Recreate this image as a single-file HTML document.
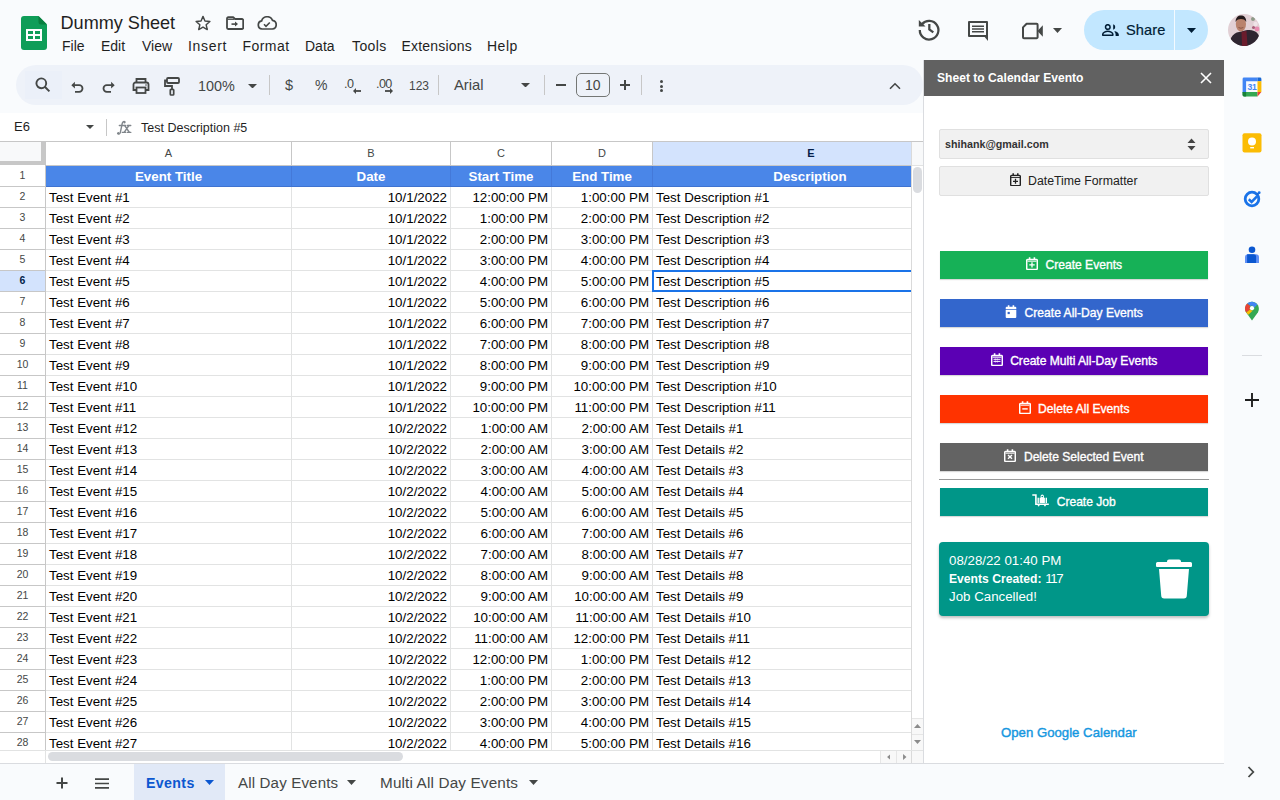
<!DOCTYPE html>
<html><head><meta charset="utf-8">
<style>
*{margin:0;padding:0;box-sizing:border-box}
html,body{width:1280px;height:800px;overflow:hidden;background:#f9fbfd;font-family:"Liberation Sans",sans-serif;position:relative}
.a{position:absolute}
svg{position:absolute;display:block}
/* header */
#title{left:60.5px;top:11.5px;font-size:18.1px;color:#1f1f1f;white-space:nowrap;line-height:22px}
.menu{top:38px;font-size:14px;color:#1f1f1f;line-height:17px;white-space:nowrap}
#pill{left:16px;top:65px;width:907px;height:40px;border-radius:20px;background:#eef2f9}
.tb{color:#444746;font-size:14px;line-height:16px;white-space:nowrap}
.sep{width:1px;height:20px;background:#c7c7c7;top:75px}
/* formula bar */
#fbar{left:0;top:113px;width:923px;height:29px;background:#fff}
/* grid */
#gridbg{left:0;top:141px;width:923px;height:622px;background:#fff}
.rh{position:absolute;left:0;width:45px;height:20px;text-align:center;font-size:10.5px;line-height:19px;color:#444746}
.rh.sel{background:#d3e3fd;color:#0b57d0;font-weight:bold;color:#041e49}
.ch{position:absolute;top:142px;height:23px;text-align:center;font-size:11px;line-height:22px;color:#444746}
.ch.sel{background:#d3e3fd;color:#041e49;font-weight:bold}
.c{position:absolute;height:20px;font-size:13.33px;line-height:21px;color:#000;white-space:nowrap;overflow:hidden;padding:0 3px}
.c.r{text-align:right}
.c.hd{background:#4a86e8;color:#fff;font-weight:bold;text-align:center}
.hl{position:absolute;left:0;width:911px;height:1px;background:#e2e3e3}
.vl{position:absolute;top:142px;width:1px;height:608px;background:#e2e3e3}
.vl.h{background:#c7c7c7;height:23px}
/* panel */
#panel{left:923px;top:60px;width:301px;height:703px;background:#fff;border-left:1px solid #dadce0}
#phead{left:924px;top:60px;width:300px;height:36px;background:#616161}
.btn{position:absolute;left:940px;width:268px;height:28px;color:#fff;font-size:12.1px;display:flex;align-items:center;justify-content:center;gap:7.5px;box-shadow:0 1px 1px rgba(0,0,0,.15)}
.btn svg{transform:translateY(-2px)}
.btn span{-webkit-text-stroke:0.35px #fff;line-height:15px;margin-top:0}
/* sidebar */
#side{left:1224px;top:60px;width:56px;height:740px;background:#f9fbfd}
/* bottom */
#bottom{left:0;top:763px;width:1224px;height:37px;background:#f9fbfd;border-top:1px solid #dadce0}
.tab{top:775px;font-size:14px;line-height:17px;color:#444746;white-space:nowrap}
</style></head><body>
<!-- logo -->
<svg style="left:21px;top:16px" width="26" height="34" viewBox="0 0 26 34">
<path d="M3 0h14.5L26 8.5V31a3 3 0 0 1-3 3H3a3 3 0 0 1-3-3V3a3 3 0 0 1 3-3z" fill="#0f9d58"/>
<path d="M17.5 0L26 8.5h-6a2.5 2.5 0 0 1-2.5-2.5z" fill="#087f3f"/>
<rect x="5" y="13" width="16" height="12" fill="#fff"/>
<rect x="7" y="15" width="5" height="3" fill="#0f9d58"/><rect x="14" y="15" width="5" height="3" fill="#0f9d58"/>
<rect x="7" y="20" width="5" height="3" fill="#0f9d58"/><rect x="14" y="20" width="5" height="3" fill="#0f9d58"/>
</svg>
<div class="a" id="title">Dummy Sheet</div>
<div class="a menu" style="left:62px">File</div>
<div class="a menu" style="left:101px">Edit</div>
<div class="a menu" style="left:142px">View</div>
<div class="a menu" style="left:188px;letter-spacing:0.7px">Insert</div>
<div class="a menu" style="left:242.5px;letter-spacing:0.45px">Format</div>
<div class="a menu" style="left:305px">Data</div>
<div class="a menu" style="left:352px;letter-spacing:0.4px">Tools</div>
<div class="a menu" style="left:401.5px;letter-spacing:0.2px">Extensions</div>
<div class="a menu" style="left:487px;letter-spacing:0.5px">Help</div>


<!-- star -->
<svg style="left:194px;top:14px" width="18" height="18" viewBox="0 0 24 24"><path d="M12 3.2l2.6 6.1 6.6.6-5 4.4 1.5 6.5L12 17.4l-5.7 3.4 1.5-6.5-5-4.4 6.6-.6z" fill="none" stroke="#444746" stroke-width="1.9" stroke-linejoin="round"/></svg>
<!-- folder move -->
<svg style="left:226px;top:16px" width="18" height="14" viewBox="0 0 18 14"><path d="M2.2 1.2h5l1.8 1.8h7a1.2 1.2 0 0 1 1.2 1.2v7.6a1.2 1.2 0 0 1-1.2 1.2H2.2A1.2 1.2 0 0 1 1 11.8V2.4a1.2 1.2 0 0 1 1.2-1.2z" fill="none" stroke="#444746" stroke-width="1.8" stroke-linejoin="round"/><path d="M1.5 2.5h6.5v1.4H1.5z" fill="#444746"/><path d="M5.5 8.1h4" stroke="#444746" stroke-width="1.6"/><path d="M9 5.6l3 2.5-3 2.5z" fill="#444746"/></svg>
<!-- cloud done -->
<svg style="left:257px;top:16px" width="20" height="14" viewBox="0 0 20 14"><path d="M5 13A4.1 4.1 0 0 1 4.6 4.9 5.8 5.8 0 0 1 15.5 4.3 4.4 4.4 0 0 1 15.4 13z" fill="none" stroke="#444746" stroke-width="1.7"/><path d="M7 8.3l2 2 3.8-3.8" fill="none" stroke="#444746" stroke-width="1.6"/></svg>
<!-- history -->
<svg style="left:915.5px;top:15.5px" width="26" height="26" viewBox="0 0 24 24"><path d="M5.5 7.6A8.6 8.6 0 1 1 3.5 13" fill="none" stroke="#444746" stroke-width="2.1"/><path d="M2.6 3.6v6.2h6.2z" fill="#444746"/><path d="M12.3 7.4v5l3.7 2.7" fill="none" stroke="#444746" stroke-width="2.1"/></svg>
<!-- comment -->
<svg style="left:967px;top:20px" width="22" height="22" viewBox="0 0 22 22"><path d="M2 2h18v14H2z" fill="none" stroke="#444746" stroke-width="2" stroke-linejoin="round"/><path d="M16 15h5v6z" fill="#444746"/><path d="M5 6.2h12M5 9h12M5 11.8h12" stroke="#444746" stroke-width="1.5"/></svg>
<!-- meet -->
<svg style="left:1022px;top:22px" width="22" height="18" viewBox="0 0 22 18"><path d="M4.6 1.8h10a1 1 0 0 1 1 1v12.4a1 1 0 0 1-1 1H2a1 1 0 0 1-1-1V5.4z" fill="none" stroke="#444746" stroke-width="2" stroke-linejoin="round"/><path d="M15.5 8.9l5.3-5.6v11.4l-5.3-5.6z" fill="#444746"/></svg>
<svg style="left:1053px;top:28px" width="9" height="5" viewBox="0 0 9 5"><path d="M0 0h9L4.5 5z" fill="#444746"/></svg>
<!-- share -->
<div class="a" style="left:1084px;top:10px;width:124px;height:40px;border-radius:20px;background:#c2e7ff"></div>
<div class="a" style="left:1174px;top:10px;width:1px;height:40px;background:#f4faff"></div>
<svg style="left:1102px;top:24px" width="17" height="12" viewBox="0 0 17 12"><circle cx="5.8" cy="3" r="2.3" fill="none" stroke="#001d35" stroke-width="1.5"/><path d="M.75 11.25V10.3c0-1.8 3-3 5.05-3s5.05 1.2 5.05 3v.95z" fill="none" stroke="#001d35" stroke-width="1.5" stroke-linejoin="round"/><path d="M11.2.3a2.8 2.8 0 0 1 0 5.4z" fill="#001d35"/><path d="M13.2 7.3c1.8.6 3.6 1.6 3.6 3.3V12h-3.2v-1.4c0-1.3-.5-2.3-1.4-3.1z" fill="#001d35"/></svg>
<div class="a" style="left:1126px;top:22px;font-size:14.6px;line-height:17px;color:#001d35;letter-spacing:0.1px;-webkit-text-stroke:0.2px #001d35">Share</div>
<svg style="left:1187px;top:28px" width="9" height="5" viewBox="0 0 9 5"><path d="M0 0h9L4.5 5z" fill="#001d35"/></svg>
<!-- avatar -->
<svg style="left:1228px;top:14px" width="32" height="32" viewBox="0 0 32 32"><defs><clipPath id="av"><circle cx="16" cy="16" r="16"/></clipPath></defs><g clip-path="url(#av)">
<rect width="32" height="32" fill="#e2d0d5"/>
<circle cx="25" cy="5" r="2" fill="#8c9a88"/><circle cx="27.5" cy="10" r="2.2" fill="#efe4e8"/><circle cx="29" cy="15" r="2.4" fill="#e88cb0"/><circle cx="25.5" cy="13.5" r="1.5" fill="#a8607a"/>
<path d="M1 32L3 24C5 20 8 18.5 11 18L17 16.5C22 15.5 27 16 30 20L32 24V32z" fill="#2e2530"/>
<path d="M13.5 18L18.5 16.8L19.5 32H14z" fill="#6a1c2c"/>
<ellipse cx="12.9" cy="10" rx="5.1" ry="7.6" fill="#b9826c"/>
<path d="M7.6 8C7.6 3.5 10.2 1.6 13 1.6S18.4 3.5 18.2 8C17 5.6 15.2 5 13 5S8.8 5.6 7.6 8z" fill="#241a1c"/>
<path d="M10.5 13.5q2.4 1.5 4.8 0" fill="none" stroke="#7d4a3c" stroke-width="0.8"/>
</g></svg>
<div class="a" id="pill"></div>
<div class="a" id="fbar"></div>
<div class="a" id="gridbg"></div>
<div class="a" style="left:14px;top:119px;font-size:13px;line-height:16px;color:#1f1f1f">E6</div>
<svg style="left:86px;top:125px" width="8" height="4" viewBox="0 0 8 4"><path d="M0 0h8L4 4z" fill="#444746"/></svg>
<div class="a" style="left:106px;top:119px;width:1px;height:17px;background:#c7c7c7"></div>
<svg style="left:110px;top:115px" width="30" height="25" viewBox="0 0 30 25"><g fill="none" stroke="#80868b" stroke-linecap="round"><path d="M7.6 18.4c.6 1.2 2.2 1 2.7-.8L12.3 8.2c.4-1.6 1.9-2.2 2.7-1.2" stroke-width="1.4"/><path d="M9.3 10.5h6.2M17.2 10.5h3.6M12.2 17.3h3.5M17.3 17.3h3.6" stroke-width="1.3"/><path d="M14.8 10.6l4.4 6.6M18.8 10.6l-4.4 6.6" stroke-width="1.5"/></g><circle cx="8.4" cy="18.2" r="1.1" fill="#80868b"/><circle cx="14.4" cy="7.6" r="1" fill="#80868b"/></svg>
<div class="a" style="left:141px;top:119.5px;font-size:12.5px;line-height:16px;color:#1f1f1f">Test Description #5</div>

<div class="a" style="left:0;top:0;width:911px;height:750px;overflow:hidden"><div class="ch" style="left:46px;width:245px">A</div>
<div class="ch" style="left:292px;width:158px">B</div>
<div class="ch" style="left:451px;width:100px">C</div>
<div class="ch" style="left:552px;width:100px">D</div>
<div class="ch sel" style="left:653px;width:314px;padding-left:2px">E</div></div>
<div class="a" style="left:0;top:0;width:911px;height:750px;overflow:hidden"><div class="rh" style="top:166px">1</div>
<div class="c hd" style="left:46px;top:166px;width:245px">Event Title</div>
<div class="c hd" style="left:292px;top:166px;width:158px">Date</div>
<div class="c hd" style="left:451px;top:166px;width:100px">Start Time</div>
<div class="c hd" style="left:552px;top:166px;width:100px">End Time</div>
<div class="c hd" style="left:653px;top:166px;width:314px">Description</div>
<div class="hl" style="top:186px"></div>
<div class="hl" style="top:186px;width:45px;background:#c7c7c7"></div>
<div class="rh" style="top:187px">2</div>
<div class="c l" style="left:46px;top:187px;width:245px">Test Event #1</div>
<div class="c r" style="left:292px;top:187px;width:158px">10/1/2022</div>
<div class="c r" style="left:451px;top:187px;width:100px">12:00:00 PM</div>
<div class="c r" style="left:552px;top:187px;width:100px">1:00:00 PM</div>
<div class="c l" style="left:653px;top:187px;width:314px">Test Description #1</div>
<div class="hl" style="top:207px"></div>
<div class="hl" style="top:207px;width:45px;background:#c7c7c7"></div>
<div class="rh" style="top:208px">3</div>
<div class="c l" style="left:46px;top:208px;width:245px">Test Event #2</div>
<div class="c r" style="left:292px;top:208px;width:158px">10/1/2022</div>
<div class="c r" style="left:451px;top:208px;width:100px">1:00:00 PM</div>
<div class="c r" style="left:552px;top:208px;width:100px">2:00:00 PM</div>
<div class="c l" style="left:653px;top:208px;width:314px">Test Description #2</div>
<div class="hl" style="top:228px"></div>
<div class="hl" style="top:228px;width:45px;background:#c7c7c7"></div>
<div class="rh" style="top:229px">4</div>
<div class="c l" style="left:46px;top:229px;width:245px">Test Event #3</div>
<div class="c r" style="left:292px;top:229px;width:158px">10/1/2022</div>
<div class="c r" style="left:451px;top:229px;width:100px">2:00:00 PM</div>
<div class="c r" style="left:552px;top:229px;width:100px">3:00:00 PM</div>
<div class="c l" style="left:653px;top:229px;width:314px">Test Description #3</div>
<div class="hl" style="top:249px"></div>
<div class="hl" style="top:249px;width:45px;background:#c7c7c7"></div>
<div class="rh" style="top:250px">5</div>
<div class="c l" style="left:46px;top:250px;width:245px">Test Event #4</div>
<div class="c r" style="left:292px;top:250px;width:158px">10/1/2022</div>
<div class="c r" style="left:451px;top:250px;width:100px">3:00:00 PM</div>
<div class="c r" style="left:552px;top:250px;width:100px">4:00:00 PM</div>
<div class="c l" style="left:653px;top:250px;width:314px">Test Description #4</div>
<div class="hl" style="top:270px"></div>
<div class="hl" style="top:270px;width:45px;background:#c7c7c7"></div>
<div class="rh sel" style="top:271px">6</div>
<div class="c l" style="left:46px;top:271px;width:245px">Test Event #5</div>
<div class="c r" style="left:292px;top:271px;width:158px">10/1/2022</div>
<div class="c r" style="left:451px;top:271px;width:100px">4:00:00 PM</div>
<div class="c r" style="left:552px;top:271px;width:100px">5:00:00 PM</div>
<div class="c l" style="left:653px;top:271px;width:314px">Test Description #5</div>
<div class="hl" style="top:291px"></div>
<div class="hl" style="top:291px;width:45px;background:#c7c7c7"></div>
<div class="rh" style="top:292px">7</div>
<div class="c l" style="left:46px;top:292px;width:245px">Test Event #6</div>
<div class="c r" style="left:292px;top:292px;width:158px">10/1/2022</div>
<div class="c r" style="left:451px;top:292px;width:100px">5:00:00 PM</div>
<div class="c r" style="left:552px;top:292px;width:100px">6:00:00 PM</div>
<div class="c l" style="left:653px;top:292px;width:314px">Test Description #6</div>
<div class="hl" style="top:312px"></div>
<div class="hl" style="top:312px;width:45px;background:#c7c7c7"></div>
<div class="rh" style="top:313px">8</div>
<div class="c l" style="left:46px;top:313px;width:245px">Test Event #7</div>
<div class="c r" style="left:292px;top:313px;width:158px">10/1/2022</div>
<div class="c r" style="left:451px;top:313px;width:100px">6:00:00 PM</div>
<div class="c r" style="left:552px;top:313px;width:100px">7:00:00 PM</div>
<div class="c l" style="left:653px;top:313px;width:314px">Test Description #7</div>
<div class="hl" style="top:333px"></div>
<div class="hl" style="top:333px;width:45px;background:#c7c7c7"></div>
<div class="rh" style="top:334px">9</div>
<div class="c l" style="left:46px;top:334px;width:245px">Test Event #8</div>
<div class="c r" style="left:292px;top:334px;width:158px">10/1/2022</div>
<div class="c r" style="left:451px;top:334px;width:100px">7:00:00 PM</div>
<div class="c r" style="left:552px;top:334px;width:100px">8:00:00 PM</div>
<div class="c l" style="left:653px;top:334px;width:314px">Test Description #8</div>
<div class="hl" style="top:354px"></div>
<div class="hl" style="top:354px;width:45px;background:#c7c7c7"></div>
<div class="rh" style="top:355px">10</div>
<div class="c l" style="left:46px;top:355px;width:245px">Test Event #9</div>
<div class="c r" style="left:292px;top:355px;width:158px">10/1/2022</div>
<div class="c r" style="left:451px;top:355px;width:100px">8:00:00 PM</div>
<div class="c r" style="left:552px;top:355px;width:100px">9:00:00 PM</div>
<div class="c l" style="left:653px;top:355px;width:314px">Test Description #9</div>
<div class="hl" style="top:375px"></div>
<div class="hl" style="top:375px;width:45px;background:#c7c7c7"></div>
<div class="rh" style="top:376px">11</div>
<div class="c l" style="left:46px;top:376px;width:245px">Test Event #10</div>
<div class="c r" style="left:292px;top:376px;width:158px">10/1/2022</div>
<div class="c r" style="left:451px;top:376px;width:100px">9:00:00 PM</div>
<div class="c r" style="left:552px;top:376px;width:100px">10:00:00 PM</div>
<div class="c l" style="left:653px;top:376px;width:314px">Test Description #10</div>
<div class="hl" style="top:396px"></div>
<div class="hl" style="top:396px;width:45px;background:#c7c7c7"></div>
<div class="rh" style="top:397px">12</div>
<div class="c l" style="left:46px;top:397px;width:245px">Test Event #11</div>
<div class="c r" style="left:292px;top:397px;width:158px">10/1/2022</div>
<div class="c r" style="left:451px;top:397px;width:100px">10:00:00 PM</div>
<div class="c r" style="left:552px;top:397px;width:100px">11:00:00 PM</div>
<div class="c l" style="left:653px;top:397px;width:314px">Test Description #11</div>
<div class="hl" style="top:417px"></div>
<div class="hl" style="top:417px;width:45px;background:#c7c7c7"></div>
<div class="rh" style="top:418px">13</div>
<div class="c l" style="left:46px;top:418px;width:245px">Test Event #12</div>
<div class="c r" style="left:292px;top:418px;width:158px">10/2/2022</div>
<div class="c r" style="left:451px;top:418px;width:100px">1:00:00 AM</div>
<div class="c r" style="left:552px;top:418px;width:100px">2:00:00 AM</div>
<div class="c l" style="left:653px;top:418px;width:314px">Test Details #1</div>
<div class="hl" style="top:438px"></div>
<div class="hl" style="top:438px;width:45px;background:#c7c7c7"></div>
<div class="rh" style="top:439px">14</div>
<div class="c l" style="left:46px;top:439px;width:245px">Test Event #13</div>
<div class="c r" style="left:292px;top:439px;width:158px">10/2/2022</div>
<div class="c r" style="left:451px;top:439px;width:100px">2:00:00 AM</div>
<div class="c r" style="left:552px;top:439px;width:100px">3:00:00 AM</div>
<div class="c l" style="left:653px;top:439px;width:314px">Test Details #2</div>
<div class="hl" style="top:459px"></div>
<div class="hl" style="top:459px;width:45px;background:#c7c7c7"></div>
<div class="rh" style="top:460px">15</div>
<div class="c l" style="left:46px;top:460px;width:245px">Test Event #14</div>
<div class="c r" style="left:292px;top:460px;width:158px">10/2/2022</div>
<div class="c r" style="left:451px;top:460px;width:100px">3:00:00 AM</div>
<div class="c r" style="left:552px;top:460px;width:100px">4:00:00 AM</div>
<div class="c l" style="left:653px;top:460px;width:314px">Test Details #3</div>
<div class="hl" style="top:480px"></div>
<div class="hl" style="top:480px;width:45px;background:#c7c7c7"></div>
<div class="rh" style="top:481px">16</div>
<div class="c l" style="left:46px;top:481px;width:245px">Test Event #15</div>
<div class="c r" style="left:292px;top:481px;width:158px">10/2/2022</div>
<div class="c r" style="left:451px;top:481px;width:100px">4:00:00 AM</div>
<div class="c r" style="left:552px;top:481px;width:100px">5:00:00 AM</div>
<div class="c l" style="left:653px;top:481px;width:314px">Test Details #4</div>
<div class="hl" style="top:501px"></div>
<div class="hl" style="top:501px;width:45px;background:#c7c7c7"></div>
<div class="rh" style="top:502px">17</div>
<div class="c l" style="left:46px;top:502px;width:245px">Test Event #16</div>
<div class="c r" style="left:292px;top:502px;width:158px">10/2/2022</div>
<div class="c r" style="left:451px;top:502px;width:100px">5:00:00 AM</div>
<div class="c r" style="left:552px;top:502px;width:100px">6:00:00 AM</div>
<div class="c l" style="left:653px;top:502px;width:314px">Test Details #5</div>
<div class="hl" style="top:522px"></div>
<div class="hl" style="top:522px;width:45px;background:#c7c7c7"></div>
<div class="rh" style="top:523px">18</div>
<div class="c l" style="left:46px;top:523px;width:245px">Test Event #17</div>
<div class="c r" style="left:292px;top:523px;width:158px">10/2/2022</div>
<div class="c r" style="left:451px;top:523px;width:100px">6:00:00 AM</div>
<div class="c r" style="left:552px;top:523px;width:100px">7:00:00 AM</div>
<div class="c l" style="left:653px;top:523px;width:314px">Test Details #6</div>
<div class="hl" style="top:543px"></div>
<div class="hl" style="top:543px;width:45px;background:#c7c7c7"></div>
<div class="rh" style="top:544px">19</div>
<div class="c l" style="left:46px;top:544px;width:245px">Test Event #18</div>
<div class="c r" style="left:292px;top:544px;width:158px">10/2/2022</div>
<div class="c r" style="left:451px;top:544px;width:100px">7:00:00 AM</div>
<div class="c r" style="left:552px;top:544px;width:100px">8:00:00 AM</div>
<div class="c l" style="left:653px;top:544px;width:314px">Test Details #7</div>
<div class="hl" style="top:564px"></div>
<div class="hl" style="top:564px;width:45px;background:#c7c7c7"></div>
<div class="rh" style="top:565px">20</div>
<div class="c l" style="left:46px;top:565px;width:245px">Test Event #19</div>
<div class="c r" style="left:292px;top:565px;width:158px">10/2/2022</div>
<div class="c r" style="left:451px;top:565px;width:100px">8:00:00 AM</div>
<div class="c r" style="left:552px;top:565px;width:100px">9:00:00 AM</div>
<div class="c l" style="left:653px;top:565px;width:314px">Test Details #8</div>
<div class="hl" style="top:585px"></div>
<div class="hl" style="top:585px;width:45px;background:#c7c7c7"></div>
<div class="rh" style="top:586px">21</div>
<div class="c l" style="left:46px;top:586px;width:245px">Test Event #20</div>
<div class="c r" style="left:292px;top:586px;width:158px">10/2/2022</div>
<div class="c r" style="left:451px;top:586px;width:100px">9:00:00 AM</div>
<div class="c r" style="left:552px;top:586px;width:100px">10:00:00 AM</div>
<div class="c l" style="left:653px;top:586px;width:314px">Test Details #9</div>
<div class="hl" style="top:606px"></div>
<div class="hl" style="top:606px;width:45px;background:#c7c7c7"></div>
<div class="rh" style="top:607px">22</div>
<div class="c l" style="left:46px;top:607px;width:245px">Test Event #21</div>
<div class="c r" style="left:292px;top:607px;width:158px">10/2/2022</div>
<div class="c r" style="left:451px;top:607px;width:100px">10:00:00 AM</div>
<div class="c r" style="left:552px;top:607px;width:100px">11:00:00 AM</div>
<div class="c l" style="left:653px;top:607px;width:314px">Test Details #10</div>
<div class="hl" style="top:627px"></div>
<div class="hl" style="top:627px;width:45px;background:#c7c7c7"></div>
<div class="rh" style="top:628px">23</div>
<div class="c l" style="left:46px;top:628px;width:245px">Test Event #22</div>
<div class="c r" style="left:292px;top:628px;width:158px">10/2/2022</div>
<div class="c r" style="left:451px;top:628px;width:100px">11:00:00 AM</div>
<div class="c r" style="left:552px;top:628px;width:100px">12:00:00 PM</div>
<div class="c l" style="left:653px;top:628px;width:314px">Test Details #11</div>
<div class="hl" style="top:648px"></div>
<div class="hl" style="top:648px;width:45px;background:#c7c7c7"></div>
<div class="rh" style="top:649px">24</div>
<div class="c l" style="left:46px;top:649px;width:245px">Test Event #23</div>
<div class="c r" style="left:292px;top:649px;width:158px">10/2/2022</div>
<div class="c r" style="left:451px;top:649px;width:100px">12:00:00 PM</div>
<div class="c r" style="left:552px;top:649px;width:100px">1:00:00 PM</div>
<div class="c l" style="left:653px;top:649px;width:314px">Test Details #12</div>
<div class="hl" style="top:669px"></div>
<div class="hl" style="top:669px;width:45px;background:#c7c7c7"></div>
<div class="rh" style="top:670px">25</div>
<div class="c l" style="left:46px;top:670px;width:245px">Test Event #24</div>
<div class="c r" style="left:292px;top:670px;width:158px">10/2/2022</div>
<div class="c r" style="left:451px;top:670px;width:100px">1:00:00 PM</div>
<div class="c r" style="left:552px;top:670px;width:100px">2:00:00 PM</div>
<div class="c l" style="left:653px;top:670px;width:314px">Test Details #13</div>
<div class="hl" style="top:690px"></div>
<div class="hl" style="top:690px;width:45px;background:#c7c7c7"></div>
<div class="rh" style="top:691px">26</div>
<div class="c l" style="left:46px;top:691px;width:245px">Test Event #25</div>
<div class="c r" style="left:292px;top:691px;width:158px">10/2/2022</div>
<div class="c r" style="left:451px;top:691px;width:100px">2:00:00 PM</div>
<div class="c r" style="left:552px;top:691px;width:100px">3:00:00 PM</div>
<div class="c l" style="left:653px;top:691px;width:314px">Test Details #14</div>
<div class="hl" style="top:711px"></div>
<div class="hl" style="top:711px;width:45px;background:#c7c7c7"></div>
<div class="rh" style="top:712px">27</div>
<div class="c l" style="left:46px;top:712px;width:245px">Test Event #26</div>
<div class="c r" style="left:292px;top:712px;width:158px">10/2/2022</div>
<div class="c r" style="left:451px;top:712px;width:100px">3:00:00 PM</div>
<div class="c r" style="left:552px;top:712px;width:100px">4:00:00 PM</div>
<div class="c l" style="left:653px;top:712px;width:314px">Test Details #15</div>
<div class="hl" style="top:732px"></div>
<div class="hl" style="top:732px;width:45px;background:#c7c7c7"></div>
<div class="rh" style="top:733px">28</div>
<div class="c l" style="left:46px;top:733px;width:245px">Test Event #27</div>
<div class="c r" style="left:292px;top:733px;width:158px">10/2/2022</div>
<div class="c r" style="left:451px;top:733px;width:100px">4:00:00 PM</div>
<div class="c r" style="left:552px;top:733px;width:100px">5:00:00 PM</div>
<div class="c l" style="left:653px;top:733px;width:314px">Test Details #16</div>
<div class="hl" style="top:753px"></div>
<div class="hl" style="top:753px;width:45px;background:#c7c7c7"></div></div>
<div class="vl" style="left:291px"></div>
<div class="vl h" style="left:291px"></div>
<div class="vl" style="left:450px"></div>
<div class="vl h" style="left:450px"></div>
<div class="vl" style="left:551px"></div>
<div class="vl h" style="left:551px"></div>
<div class="vl" style="left:652px"></div>
<div class="vl h" style="left:652px"></div>
<div class="a" style="left:291px;top:166px;width:1px;height:20px;background:#4479d9"></div>
<div class="a" style="left:450px;top:166px;width:1px;height:20px;background:#4479d9"></div>
<div class="a" style="left:551px;top:166px;width:1px;height:20px;background:#4479d9"></div>
<div class="a" style="left:652px;top:166px;width:1px;height:20px;background:#4479d9"></div>
<div class="a" style="left:46px;top:186px;width:865px;height:1px;background:#3f73d0"></div>
<!-- grid chrome -->
<div class="a" style="left:0;top:141px;width:923px;height:1px;background:#c7c7c7"></div>
<div class="a" style="left:0;top:142px;width:41px;height:19px;background:#f8f9fa"></div>
<div class="a" style="left:41px;top:142px;width:4px;height:23px;background:#c7c7c7"></div>
<div class="a" style="left:0;top:161px;width:45px;height:4px;background:#c7c7c7"></div>
<div class="a" style="left:45px;top:165px;width:866px;height:1px;background:#c7c7c7"></div>
<div class="a" style="left:45px;top:142px;width:1px;height:621px;background:#c7c7c7"></div>
<div class="a" style="left:911px;top:142px;width:12px;height:24px;background:#f8f9fa"></div>
<div class="a" style="left:911px;top:142px;width:1px;height:621px;background:#dadada"></div>
<div class="a" style="left:912px;top:165px;width:11px;height:1px;background:#e2e3e3"></div>
<div class="a" style="left:913px;top:167px;width:9px;height:26px;border-radius:5px;background:#dadce0"></div>
<div class="a" style="left:912px;top:718px;width:11px;height:32px;background:#f8f8f8;border-top:1px solid #e6e6e6"></div>
<div class="a" style="left:912px;top:734px;width:11px;height:1px;background:#e6e6e6"></div>
<svg style="left:914px;top:724px" width="7" height="4" viewBox="0 0 7 4"><path d="M0 4h7L3.5 0z" fill="#8b8b8b"/></svg>
<svg style="left:914px;top:740px" width="7" height="4" viewBox="0 0 7 4"><path d="M0 0h7L3.5 4z" fill="#8b8b8b"/></svg>
<div class="a" style="left:0;top:750px;width:923px;height:1px;background:#e2e3e3"></div>
<div class="a" style="left:0;top:751px;width:923px;height:12px;background:#fff"></div>
<div class="a" style="left:45px;top:751px;width:1px;height:12px;background:#e2e3e3"></div>
<div class="a" style="left:48px;top:752px;width:355px;height:9px;border-radius:5px;background:#dadce0"></div>
<div class="a" style="left:880px;top:751px;width:31px;height:12px;background:#f8f8f8;border-left:1px solid #e6e6e6"></div>
<div class="a" style="left:896px;top:751px;width:1px;height:12px;background:#e6e6e6"></div>
<div class="a" style="left:911px;top:751px;width:12px;height:12px;background:#f8f8f8;border-left:1px solid #dadada"></div>
<svg style="left:886.5px;top:754px" width="3.5" height="6" viewBox="0 0 4 7"><path d="M4 0v7L0 3.5z" fill="#8b8b8b"/></svg>
<svg style="left:903px;top:754px" width="3.5" height="6" viewBox="0 0 4 7"><path d="M0 0v7L4 3.5z" fill="#8b8b8b"/></svg>
<!-- selection -->
<div class="a" style="left:652px;top:270px;width:259px;height:22px;border:2px solid #1a73e8;border-right:none"></div>

<div class="a" style="left:25px;top:71px;width:37px;height:28px;background:#ebf0f9;border-radius:0"></div>
<!-- search -->
<svg style="left:35px;top:77px" width="16" height="16" viewBox="0 0 16 16"><circle cx="6.3" cy="6.3" r="4.9" fill="none" stroke="#444746" stroke-width="1.9"/><path d="M9.8 9.8l4.6 4.6" stroke="#444746" stroke-width="2"/></svg>
<!-- undo -->
<svg style="left:70px;top:79px" width="14" height="14" viewBox="0 0 14 14"><path d="M4.2 6.2h5a3.3 3.3 0 0 1 0 6.6H5" fill="none" stroke="#444746" stroke-width="1.8"/><path d="M1.3 6.2l3.6-3.4v6.8z" fill="#444746"/></svg>
<!-- redo -->
<svg style="left:102px;top:79px" width="14" height="14" viewBox="0 0 14 14"><path d="M9.8 6.2h-5a3.3 3.3 0 0 0 0 6.6H9" fill="none" stroke="#444746" stroke-width="1.8"/><path d="M12.7 6.2L9.1 2.8v6.8z" fill="#444746"/></svg>
<!-- print -->
<svg style="left:132px;top:78px" width="18" height="16" viewBox="0 0 18 16"><path d="M4.5 4.5V1h9v3.5" fill="none" stroke="#444746" stroke-width="1.8"/><path d="M4 12H1.5V6.5a2 2 0 0 1 2-2h11a2 2 0 0 1 2 2V12H14" fill="none" stroke="#444746" stroke-width="1.8"/><rect x="4.5" y="9.5" width="9" height="5.5" fill="none" stroke="#444746" stroke-width="1.8"/><circle cx="14" cy="7" r="0.8" fill="#444746"/></svg>
<!-- paint format -->
<svg style="left:164px;top:77px" width="16" height="19" viewBox="0 0 16 19"><rect x="3" y="1" width="12" height="5" rx="1" fill="none" stroke="#444746" stroke-width="1.8"/><path d="M3 3.5H1V9h7v3.5" fill="none" stroke="#444746" stroke-width="1.8"/><rect x="6.3" y="12.3" width="3.4" height="5.7" rx="0.8" fill="none" stroke="#444746" stroke-width="1.7"/></svg>
<div class="a tb" style="left:198px;top:77.5px;font-size:14.4px">100%</div>
<svg style="left:247.5px;top:83.5px" width="9" height="4.5" viewBox="0 0 8 4"><path d="M0 0h8L4 4z" fill="#444746"/></svg>
<div class="a sep" style="left:269px"></div>
<div class="a tb" style="left:285px;top:77px;font-size:14.5px">$</div>
<div class="a tb" style="left:315px;top:77px;font-size:14px">%</div>
<div class="a tb" style="left:344px;top:76px;font-size:12.6px;letter-spacing:-0.6px">.0</div>
<svg style="left:353px;top:88px" width="8" height="6" viewBox="0 0 8 6"><path d="M2 3h6" stroke="#444746" stroke-width="1.8"/><path d="M0 3l3-3v6z" fill="#444746"/></svg>
<div class="a tb" style="left:376px;top:76px;font-size:12.6px;letter-spacing:-0.6px">.00</div>
<svg style="left:385px;top:88px" width="8" height="6" viewBox="0 0 8 6"><path d="M0 3h6" stroke="#444746" stroke-width="1.8"/><path d="M8 3L5 0v6z" fill="#444746"/></svg>
<div class="a tb" style="left:409px;top:77.5px;font-size:12px">123</div>
<div class="a sep" style="left:438px"></div>
<div class="a tb" style="left:454px;top:77px;font-size:14.8px">Arial</div>
<svg style="left:520.5px;top:82.5px" width="9" height="4.5" viewBox="0 0 8 4"><path d="M0 0h8L4 4z" fill="#444746"/></svg>
<div class="a sep" style="left:544px"></div>
<div class="a" style="left:556px;top:84px;width:10px;height:2px;background:#444746"></div>
<div class="a" style="left:576px;top:73px;width:34px;height:24px;border:1px solid #747775;border-radius:5px"></div>
<div class="a tb" style="left:585px;top:77px;font-size:14px">10</div>
<div class="a" style="left:620px;top:84px;width:10px;height:2px;background:#444746"></div>
<div class="a" style="left:624px;top:80px;width:2px;height:10px;background:#444746"></div>
<div class="a sep" style="left:641px"></div>
<div class="a" style="left:660px;top:80px;width:3px;height:3px;border-radius:2px;background:#444746"></div>
<div class="a" style="left:660px;top:84.5px;width:3px;height:3px;border-radius:2px;background:#444746"></div>
<div class="a" style="left:660px;top:89px;width:3px;height:3px;border-radius:2px;background:#444746"></div>
<svg style="left:889px;top:82px" width="12" height="8" viewBox="0 0 12 8"><path d="M1 6.8l5-5 5 5" fill="none" stroke="#444746" stroke-width="1.6"/></svg>


<div class="a" id="panel"></div>
<div class="a" id="phead"></div>

<div class="a" style="left:937px;top:71px;font-size:12.1px;font-weight:bold;color:#fff;line-height:15px;white-space:nowrap">Sheet to Calendar Evento</div>
<svg style="left:1200px;top:72px" width="12" height="12" viewBox="0 0 12 12"><path d="M1 1l10 10M11 1L1 11" stroke="#fff" stroke-width="1.6"/></svg>
<div class="a" style="left:939px;top:129px;width:270px;height:30px;background:#f1f1f1;border:1px solid #e0e0e0;border-radius:2px"></div>
<div class="a" style="left:945px;top:137px;font-size:10.7px;font-weight:bold;color:#333;line-height:14px;white-space:nowrap">shihank@gmail.com</div>
<svg style="left:1187px;top:138px" width="9" height="13" viewBox="0 0 9 13"><path d="M0.5 5L4.5 0.5 8.5 5z M0.5 8l4 4.5 4-4.5z" fill="#444"/></svg>
<div class="a" style="left:939px;top:166px;width:270px;height:30px;background:#f1f1f1;border:1px solid #e0e0e0;border-radius:2px"></div>
<svg style="left:1009.5px;top:173px" width="11" height="13" viewBox="0 0 11 13"><path d="M1.6 2.4h7.8a.9.9 0 0 1 .9.9v8.4a.9.9 0 0 1-.9.9H1.6a.9.9 0 0 1-.9-.9V3.3a.9.9 0 0 1 .9-.9z" fill="none" stroke="#222" stroke-width="1.4"/><path d="M3.2 0.3v2.8M7.8 0.3v2.8" stroke="#222" stroke-width="1.5"/><path d="M1 4.4h9" stroke="#222" stroke-width="1"/><path d="M5.5 5.8v5M3 8.3h5" stroke="#222" stroke-width="1.3"/></svg>
<div class="a" style="left:1028px;top:173.5px;font-size:12.3px;color:#222;line-height:15px;white-space:nowrap">DateTime Formatter</div>

<div class="btn" style="top:251px;background:#16b157"><svg width="12" height="13" viewBox="0 0 12 13" style="position:static;flex:none"><path d="M1.6 2.6h8.8a.9.9 0 0 1 .9.9v8a.9.9 0 0 1-.9.9H1.6a.9.9 0 0 1-.9-.9v-8a.9.9 0 0 1 .9-.9z" fill="none" stroke="#fff" stroke-width="1.5"/><path d="M3.6 0.2v2.8M8.4 0.2v2.8" stroke="#fff" stroke-width="1.6"/><path d="M6 5.2v5.4M3.3 7.9h5.4" stroke="#fff" stroke-width="1.3"/><path d="M1.5 4.2h9" stroke="#fff" stroke-width="1"/></svg><span>Create Events</span></div>
<div class="btn" style="top:299px;background:#3366cc"><svg width="12" height="13" viewBox="0 0 12 13" style="position:static;flex:none"><path d="M3.6 0.2v2.8M8.4 0.2v2.8" stroke="#fff" stroke-width="1.6"/><path d="M1.7 1.8h8.6a1 1 0 0 1 1 1v1.4H.7V2.8a1 1 0 0 1 1-1z" fill="#fff"/><path d="M.7 5h10.6v7a1 1 0 0 1-1 1H1.7a1 1 0 0 1-1-1z" fill="#fff"/><rect x="2.6" y="6.9" width="2.2" height="2.2" fill="#3366cc"/></svg><span>Create All-Day Events</span></div>
<div class="btn" style="top:347px;background:#5b00b4"><svg width="12" height="13" viewBox="0 0 12 13" style="position:static;flex:none"><path d="M1.6 2.6h8.8a.9.9 0 0 1 .9.9v8a.9.9 0 0 1-.9.9H1.6a.9.9 0 0 1-.9-.9v-8a.9.9 0 0 1 .9-.9z" fill="none" stroke="#fff" stroke-width="1.5"/><path d="M3.6 0.2v2.8M8.4 0.2v2.8" stroke="#fff" stroke-width="1.6"/><path d="M1.5 4.2h9" stroke="#fff" stroke-width="1"/><path d="M2.5 6.3h7M2.5 8.4h7" stroke="#fff" stroke-width="1"/><path d="M4.3 5v5M6.3 5v5" stroke="#fff" stroke-width=".6" opacity=".6"/></svg><span>Create Multi All-Day Events</span></div>
<div class="btn" style="top:395px;background:#ff3300"><svg width="12" height="13" viewBox="0 0 12 13" style="position:static;flex:none"><path d="M1.6 2.6h8.8a.9.9 0 0 1 .9.9v8a.9.9 0 0 1-.9.9H1.6a.9.9 0 0 1-.9-.9v-8a.9.9 0 0 1 .9-.9z" fill="none" stroke="#fff" stroke-width="1.5"/><path d="M3.6 0.2v2.8M8.4 0.2v2.8" stroke="#fff" stroke-width="1.6"/><path d="M3.3 7.9h5.4" stroke="#fff" stroke-width="1.4"/><path d="M1.5 4.2h9" stroke="#fff" stroke-width="1"/></svg><span>Delete All Events</span></div>
<div class="btn" style="top:443px;background:#636363"><svg width="12" height="13" viewBox="0 0 12 13" style="position:static;flex:none"><path d="M1.6 2.6h8.8a.9.9 0 0 1 .9.9v8a.9.9 0 0 1-.9.9H1.6a.9.9 0 0 1-.9-.9v-8a.9.9 0 0 1 .9-.9z" fill="none" stroke="#fff" stroke-width="1.5"/><path d="M3.6 0.2v2.8M8.4 0.2v2.8" stroke="#fff" stroke-width="1.6"/><path d="M4 6l4 3.8M8 6L4 9.8" stroke="#fff" stroke-width="1.4"/><path d="M1.5 4.2h9" stroke="#fff" stroke-width="1"/></svg><span>Delete Selected Event</span></div>
<div class="a" style="left:939px;top:479px;width:270px;height:1px;background:#999"></div>
<div class="btn" style="top:488px;background:#009688"><svg width="17" height="13" viewBox="-1 0 17 13" style="position:static;flex:none"><path d="M-0.7 1h3.6v9.3H15.8" fill="none" stroke="#fff" stroke-width="1.6"/><rect x="4.5" y="3.7" width="1.4" height="5.4" fill="#fff"/><rect x="12.6" y="3.7" width="1.4" height="5.4" fill="#fff"/><path d="M6.6 9.1V3.7h1v-1.5a1.6 1.6 0 0 1 3.3 0v1.5h1v5.4z" fill="#fff"/><rect x="8.5" y="1.9" width="1.5" height="1.2" fill="#009688"/><path d="M4.5 11h2.3l-1.1 1.8zM10.8 11h2.3l-1.1 1.8z" fill="#fff"/></svg><span>Create Job</span></div>
<div class="a" style="left:939px;top:542px;width:270px;height:74px;background:#009688;border-radius:4px;box-shadow:0 2px 3px rgba(0,0,0,.25)"></div>
<div class="a" style="left:949px;top:552px;font-size:13.3px;color:#fff;line-height:18px;white-space:nowrap">08/28/22 01:40 PM<br><b style="font-size:12.15px">Events Created:</b> <span style="letter-spacing:-1.3px">117</span><br>Job Cancelled!</div>
<svg style="left:1156px;top:559px" width="36" height="40" viewBox="0 0 36 40"><path d="M13 0.5h10a2 2 0 0 1 2 2V3h9.5a1.5 1.5 0 0 1 1.5 1.5V7a1 1 0 0 1-1 1H1a1 1 0 0 1-1-1V4.5A1.5 1.5 0 0 1 1.5 3H11v-.5a2 2 0 0 1 2-2z" fill="#fff"/><path d="M3 10h30l-2.2 26.5a3 3 0 0 1-3 3H8.2a3 3 0 0 1-3-3z" fill="#fff"/></svg>

<div class="a" style="left:1001px;top:725px;font-size:13.2px;-webkit-text-stroke:0.4px #1597df;color:#1597df;line-height:15px;white-space:nowrap">Open Google Calendar</div>
<div class="a" id="side"></div>
<div class="a" id="bottom"></div>
<!-- sidebar icons -->
<svg style="left:1242px;top:77px" width="20" height="20" viewBox="0 0 20 20">
<path d="M2 0.6h13.5v3.6H4.1v11.6H.6V2A1.4 1.4 0 0 1 2 .6z" fill="#4285f4"/>
<path d="M15.5 0.6h2.5a1.4 1.4 0 0 1 1.4 1.4v2.2h-3.9z" fill="#1967d2"/>
<path d="M15.5 4.2h3.9v10.8h-3.9z" fill="#fbbc04"/>
<path d="M4.1 15h11.4v4.4H2a1.4 1.4 0 0 1-1.4-1.4V15z" fill="#34a853"/>
<path d="M.6 15h3.5v4.4H2A1.4 1.4 0 0 1 .6 18z" fill="#188038"/>
<path d="M15.5 15h3.9l-3.9 4.4z" fill="#ea4335"/>
<text x="9.9" y="13.4" font-family="Liberation Sans" font-weight="bold" font-size="8.6" fill="#4285f4" text-anchor="middle" letter-spacing="-0.3">31</text>
</svg>
<svg style="left:1242px;top:133px" width="20" height="20" viewBox="0 0 20 20"><rect x="0.5" y="0.2" width="19" height="19.4" rx="2" fill="#fbbc04"/><circle cx="10" cy="8.6" r="4" fill="#fff"/><rect x="8.2" y="14" width="3.8" height="1.4" fill="#fff"/></svg>
<svg style="left:1243px;top:189px" width="20" height="20" viewBox="0 0 20 20"><circle cx="9" cy="10" r="6.8" fill="none" stroke="#1a73e8" stroke-width="2.8"/><path d="M5.8 10.2l2.8 2.7 5.4-5.5" fill="none" stroke="#1a73e8" stroke-width="2.6"/><path d="M13.2 5.2l2.2-2.3 1.5 1.5-2.3 2.2z" fill="#1967d2"/><circle cx="16.2" cy="3.7" r="1.4" fill="#1a73e8"/></svg>
<svg style="left:1244px;top:245px" width="16" height="19" viewBox="0 0 16 19"><circle cx="8" cy="4.8" r="3.3" fill="#0b57d0"/><path d="M4 9.2h8a3 3 0 0 1 3 3V18H1v-5.8a3 3 0 0 1 3-3z" fill="#5f8ff5"/><path d="M3.1 9.3h6.5a2.5 2.5 0 0 1 2.5 2.5V18H3.1z" fill="#0b57d0"/></svg>
<svg style="left:1244px;top:301px" width="16" height="20" viewBox="0 0 16 20">
<path d="M8 .8a7 7 0 0 1 6 10.4L8 19.5 2 11.2A7 7 0 0 1 8 .8z" fill="#34a853"/>
<path d="M3.1 2.4A7 7 0 0 1 13.4 3.6L9.8 7.3a2.2 2.2 0 0 0-3.3-2.4z" fill="#4285f4"/>
<path d="M3.1 2.4L6.5 5.2a2.4 2.4 0 0 0-.3 3.2L2.2 11.4A7 7 0 0 1 3.1 2.4z" fill="#ea4335"/>
<path d="M2.2 11.4l4-3a2.3 2.3 0 0 0 3.2.6l-5 4.8z" fill="#fbbc04"/>
<circle cx="8" cy="7.2" r="2.1" fill="#fff"/>
</svg>
<div class="a" style="left:1242px;top:355px;width:20px;height:1px;background:#dadce0"></div>
<svg style="left:1244px;top:392px" width="16" height="16" viewBox="0 0 16 16"><path d="M8 1v14M1 8h14" stroke="#1f1f1f" stroke-width="1.9"/></svg>
<svg style="left:1247px;top:766px" width="8" height="12" viewBox="0 0 8 12"><path d="M1.5 1l4.8 5-4.8 5" fill="none" stroke="#444746" stroke-width="1.8"/></svg>
<!-- bottom tabs -->
<svg style="left:56px;top:777px" width="12" height="12" viewBox="0 0 12 12"><path d="M6 .5v11M.5 6h11" stroke="#444746" stroke-width="2"/></svg>
<svg style="left:94px;top:778px" width="16" height="11" viewBox="0 0 16 11"><path d="M1 1.2h14M1 5.5h14M1 9.8h14" stroke="#444746" stroke-width="1.7"/></svg>
<div class="a" style="left:134px;top:764px;width:91px;height:36px;background:#e1e9f7"></div>
<div class="a tab" style="left:146px;top:775px;font-size:14.2px;font-weight:bold;color:#0b57d0;letter-spacing:0.35px">Events</div>
<svg style="left:205px;top:780px" width="9" height="5" viewBox="0 0 9 5"><path d="M0 0h9L4.5 5z" fill="#0b57d0"/></svg>
<div class="a tab" style="left:238px;top:774px;font-size:15.1px;letter-spacing:0.15px">All Day Events</div>
<svg style="left:347px;top:780px" width="9" height="5" viewBox="0 0 9 5"><path d="M0 0h9L4.5 5z" fill="#444746"/></svg>
<div class="a tab" style="left:380px;top:774px;font-size:15.3px;letter-spacing:0.15px">Multi All Day Events</div>
<svg style="left:529px;top:780px" width="9" height="5" viewBox="0 0 9 5"><path d="M0 0h9L4.5 5z" fill="#444746"/></svg>

</body></html>
